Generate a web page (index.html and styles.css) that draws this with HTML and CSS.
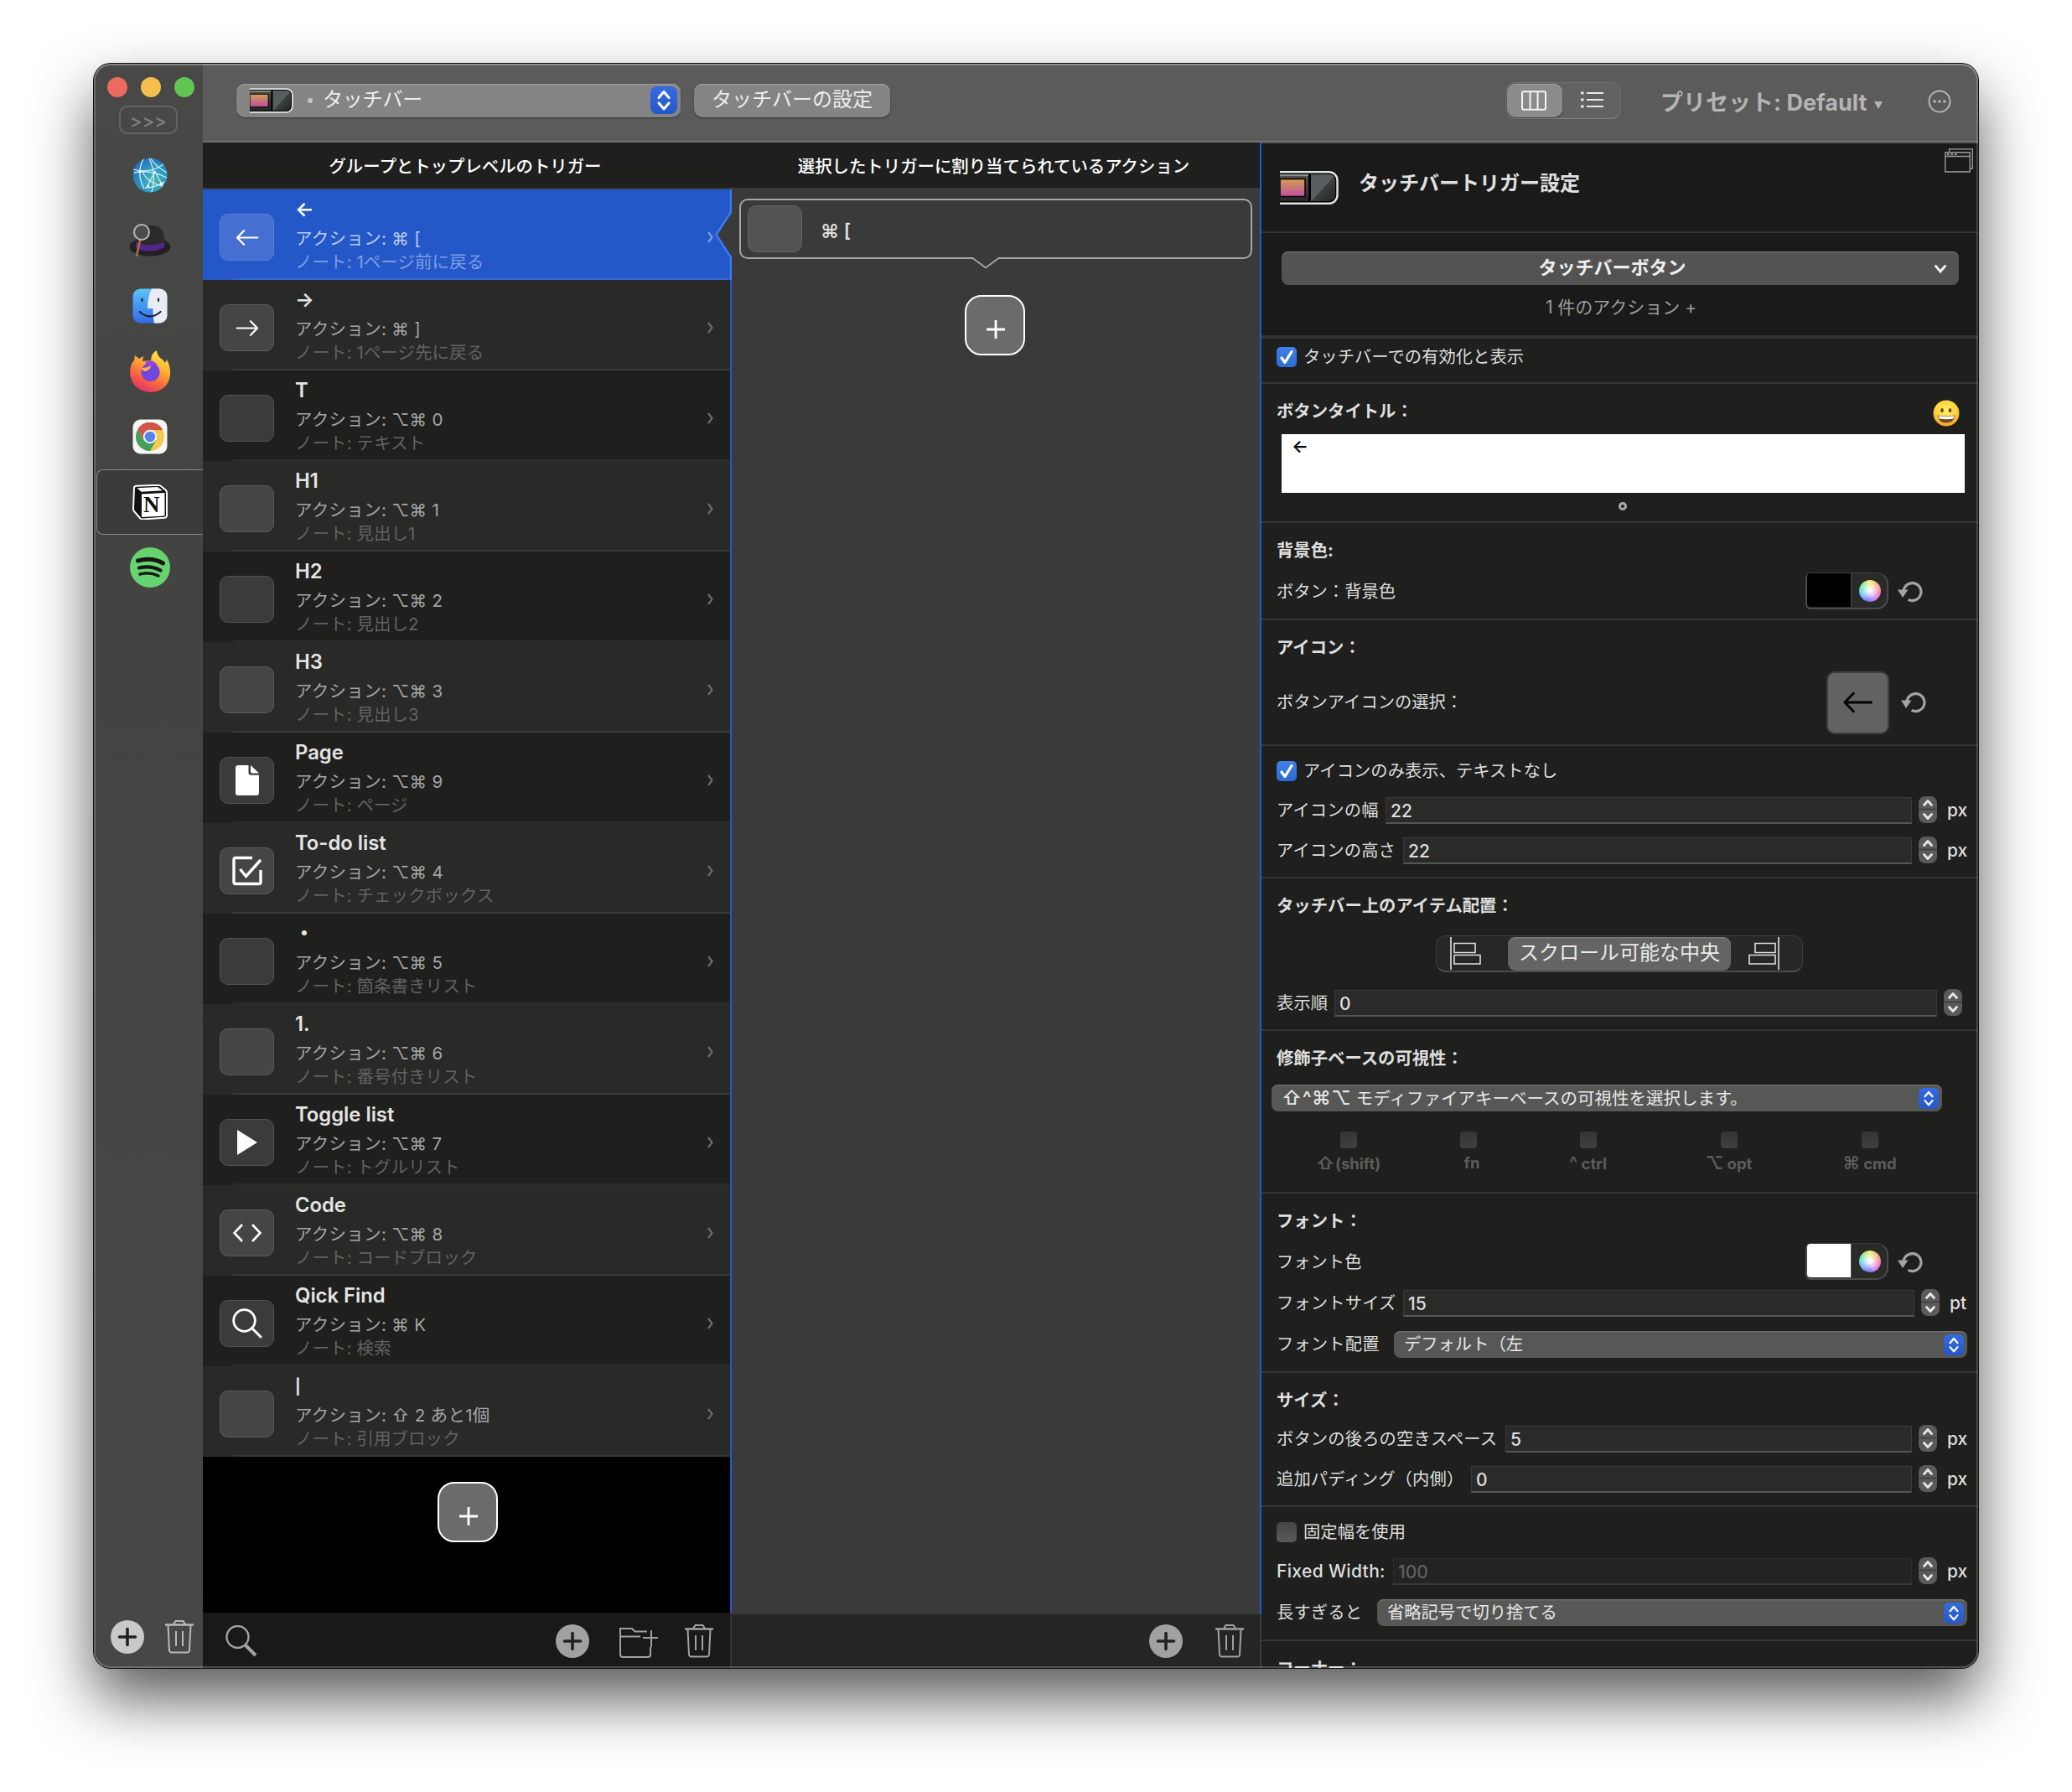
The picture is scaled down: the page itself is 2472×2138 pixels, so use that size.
FILE: index.html
```html
<!DOCTYPE html>
<html lang="ja">
<head>
<meta charset="utf-8">
<title>タッチバー</title>
<link rel="stylesheet" href="styles.css">
</head>
<body>
<svg class="defs" width="0" height="0">
  <defs>
    <linearGradient id="g-sunset" x1="0" y1="0" x2="0" y2="1"><stop offset="0" stop-color="#d49f50"/><stop offset="1" stop-color="#bf4da0"/></linearGradient>
    <linearGradient id="g-strip" x1="0" y1="0" x2="0" y2="1"><stop offset="0" stop-color="#555"/><stop offset="1" stop-color="#262626"/></linearGradient>
    <linearGradient id="g-glass" x1="0" y1="0" x2="1" y2="1"><stop offset="0" stop-color="#545c5c"/><stop offset=".5" stop-color="#56605f"/><stop offset=".52" stop-color="#3c4040"/><stop offset="1" stop-color="#222"/></linearGradient>
    <symbol id="touchbar" viewBox="0 0 70 40">
      <path d="M0 1.5h58a10 10 0 0 1 10 10v17a10 10 0 0 1-10 10H0z" fill="#000"/>
      <path d="M0 4h34v32H0z" fill="url(#g-strip)"/><path d="M0 4h34v2H0z" fill="#8c9391"/>
      <path d="M0 9.500h30v21H0z" fill="url(#g-sunset)" stroke="#000" stroke-width="1.500"/>
      <path d="M37 4h22a7 7 0 0 1 7 7v18a7 7 0 0 1-7 7H37z" fill="url(#g-glass)"/>
      <path d="M0 1.200h58.500a10 10 0 0 1 10 10v17.600a10 10 0 0 1-10 10H0" fill="none" stroke="#dfe6e4" stroke-width="2.400"/>
    </symbol>
    <symbol id="trash" viewBox="0 0 34 40">
      <g fill="none" stroke="currentColor" stroke-width="2"><path d="M0 5.500h34" stroke-width="2.600"/><path d="M10 5l2.500-4h9L24 5M3.500 6l1.500 30q.3 2.500 2.500 2.500h19q2.200 0 2.500-2.500L30.500 6M13 13v18M21 13v18"/></g>
    </symbol>
    <symbol id="add" viewBox="0 0 40 40"><circle cx="20" cy="20" r="20" fill="currentColor"/><path class="cross" d="M20 10.500v19M10.500 20h19" stroke-width="3.600" stroke-linecap="round"/></symbol>
    <symbol id="loupe" viewBox="0 0 38 38"><g fill="none" stroke="currentColor"><circle cx="14.500" cy="14" r="13" stroke-width="2.400"/><path d="M24 24l12 12" stroke-width="4"/></g></symbol>
    <symbol id="folder" viewBox="0 0 46 36"><path d="M37 23v9q0 3-3 3H4q-3 0-3-3V1h14l3.500 3.500H33M1 10.500h24M38 3v20M28 12h18" fill="none" stroke="currentColor" stroke-width="2"/></symbol>
    <symbol id="updown" viewBox="0 0 32 32"><path d="M10 13l6-7 6 7M10 19.500l6 7 6-7" fill="none" stroke="#fff" stroke-width="3" stroke-linecap="round" stroke-linejoin="round"/></symbol>
    <symbol id="step" viewBox="0 0 22 32"><path d="M0 15.500h22" stroke="#3c3c3a" stroke-width="1.500"/><path d="M6.500 10.500L11 5.500l4.500 5M6.500 21.500l4.500 5 4.500-5" fill="none" stroke="#e6e6e6" stroke-width="2.800" stroke-linecap="round" stroke-linejoin="round"/></symbol>
    <symbol id="chev" viewBox="0 0 10 14"><path d="M2 1l4.500 6L2 13" fill="none" stroke="currentColor" stroke-width="2.200"/></symbol>
    <symbol id="tick" viewBox="0 0 24 24"><path d="M6 13l4 5.500L18 5.500" fill="none" stroke="#fff" stroke-width="3.200" stroke-linecap="round" stroke-linejoin="round"/></symbol>
    <symbol id="reset" viewBox="0 0 30 26"><path d="M7 14A10.500 10.500 0 1 1 12.500 22.300" fill="none" stroke="#a3a3a1" stroke-width="3.200"/><path d="M0 10.500h12.500L6 20z" fill="#a3a3a1"/></symbol>
    <symbol id="arrow-l" viewBox="0 0 34 24"><path d="M32.500 12H2M12 1.500L1.800 12 12 22.500" fill="none" stroke="currentColor" stroke-width="2.800" stroke-linecap="round" stroke-linejoin="round"/></symbol>
    <symbol id="plus" viewBox="0 0 22 22"><path d="M11 0v22M0 11h22" stroke="#fff" stroke-width="2.800"/></symbol>
  </defs>
</svg>

<div class="window">
  <aside class="sidebar">
    <div class="lights"><i class="red"></i><i class="amber"></i><i class="green"></i></div>
    <div class="expand">&gt;&gt;&gt;</div>
    <div class="apps">
      <div class="app"><svg width="42" height="42" viewBox="0 0 42 42"><defs><radialGradient id="gl" cx=".6" cy=".65" r=".65"><stop offset="0" stop-color="#4fb3b0"/><stop offset=".55" stop-color="#3298c4"/><stop offset="1" stop-color="#2672bd"/></radialGradient></defs><circle cx="21" cy="21" r="20.500" fill="url(#gl)"/><g fill="none" stroke="#c8f2fa" stroke-width="1.300"><path d="M1 14Q20 20 37 8M13 2Q4 18 14 37M22 1Q27 10 41 18M20 1Q29 20 23 41M2 18Q22 14 41 24M27 16L18 34M27 17L35 32M15 36Q27 36 38 29M12 17Q18 30 36 34"/></g><g fill="#fff"><circle cx="9" cy="16.500" r="1.800"/><circle cx="26.500" cy="18" r="1.400"/><circle cx="34.500" cy="31.500" r="2"/><circle cx="18.500" cy="34" r="1.500"/></g></svg></div>
      <div class="app"><svg width="50" height="42" viewBox="0 0 50 42"><ellipse cx="25" cy="28.500" rx="24.500" ry="11" fill="#232023"/><path d="M9 29V16Q12 3 26 3q15 0 16 15v11Q26 38 9 29z" fill="#2a2a2b"/><path d="M8 23q17 7 34 0v6q-17 9-34 1z" fill="#552688"/><path d="M13 20L9 40" stroke="#a8703f" stroke-width="2.600"/><circle cx="15" cy="11" r="9" fill="#494b4c" stroke="#b9b9b9" stroke-width="2"/></svg></div>
      <div class="app"><svg width="42" height="42" viewBox="0 0 42 42"><defs><linearGradient id="fi" x1="0" y1="0" x2="0" y2="1"><stop offset="0" stop-color="#5cc2f7"/><stop offset="1" stop-color="#2f6cea"/></linearGradient></defs><rect x=".5" y=".5" width="41" height="41" rx="9" fill="url(#fi)"/><path d="M23 .5h9.500a9 9 0 0 1 9 9v23a9 9 0 0 1-9 9H26Q24 33 24.500 24H18Q18 10 23 .5z" fill="#e9edf3"/><path d="M11.500 12.500v2.500M31 12.500v2.500M8.500 28q12.500 11 25 0" fill="none" stroke="#1a2433" stroke-width="2.200" stroke-linecap="round"/></svg></div>
      <div class="app"><svg width="50" height="50" viewBox="0 0 50 50"><defs><linearGradient id="ff" x1=".8" y1="0" x2=".3" y2="1"><stop offset="0" stop-color="#fff04f"/><stop offset=".4" stop-color="#ffab33"/><stop offset=".72" stop-color="#f9603f"/><stop offset="1" stop-color="#dd3173"/></linearGradient></defs><path d="M1 27Q1 17 6 12l1-6 5 4 5-3-1 6 10-1Q26 4 33 0q0 7 7 11l3 4 2-4q5 9 4 19-3 19-24 20Q3 48 1 27z" fill="url(#ff)"/><circle cx="25.500" cy="26" r="11" fill="#7045e2"/><path d="M15 21q7 0 11-3 0 4-4 6-5 3-7-3z" fill="#ffb340"/><path d="M19 14q9-5 15 4-7-3-10 1z" fill="#9b3fe0"/></svg></div>
      <div class="app"><svg width="42" height="42" viewBox="0 0 42 42"><rect x=".5" y=".5" width="41" height="41" rx="9" fill="#f6f6f6"/><circle cx="21" cy="21" r="17" fill="#f6c84d"/><path d="M21 21L6.300 12.500A17 17 0 0 1 35.700 12.500H21z" fill="#cf5546"/><path d="M21 13H36A17 17 0 0 0 6.300 12.500L13.500 25z" fill="#cf5546"/><path d="M6.300 12.500A17 17 0 0 0 21 38L28.400 25.300 13.600 25.300z" fill="#459f5b"/><circle cx="21" cy="21" r="8.200" fill="#f6f6f6"/><circle cx="21" cy="21" r="6.300" fill="#5286ec"/></svg></div>
      <div class="app current"><svg width="42" height="42" viewBox="0 0 42 42"><path d="M2 4q0-2 3-2.300L30 .8q2 0 4 1.200l5.500 4.500Q41 8 41 10v27q0 2.500-3 2.800L12 41.500q-2 0-3.500-2L2 32q-1-1-1-3z" fill="#111" stroke="#fff" stroke-width="2"/><path d="M5.500 4.200L30 3l6 4.300-25.500 1.500z" fill="#fff"/><path d="M11 11.500L38.500 10v27.500L11 39z" fill="#fff"/></svg><b class="notion">N</b></div>
      <div class="app"><svg width="48" height="48" viewBox="0 0 48 48"><circle cx="24" cy="24" r="24" fill="#65d36e"/><g fill="none" stroke="#151515" stroke-linecap="round"><path d="M9.500 16Q26 11.500 39.500 19" stroke-width="5"/><path d="M11 24.500Q25 21 36.500 27.500" stroke-width="4.200"/><path d="M12 32Q24 29 34 34" stroke-width="3.400"/></g></svg></div>
    </div>
    <div class="side-foot"><svg class="light" width="40" height="40"><use href="#add"/></svg><svg width="34" height="40"><use href="#trash"/></svg></div>
  </aside>

  <div class="main">
    <header class="toolbar">
      <div class="popup big"><svg width="52" height="30" class="tb-small"><use href="#touchbar"/></svg><i class="dot"></i><span>タッチバー</span><svg class="knob"><use href="#updown"/></svg></div>
      <div class="button">タッチバーの設定</div>
      <div class="segments">
        <div class="on"><svg width="30" height="24" viewBox="0 0 30 24"><path d="M3 1.200h24q2 0 2 2v17.600q0 2-2 2H3q-2 0-2-2V3.200q0-2 2-2zM10.500 1v22M19.500 1v22" fill="none" stroke="#f4f4f4" stroke-width="2"/></svg></div>
        <div><svg width="27" height="20" viewBox="0 0 27 20"><path d="M7 2h20M7 10h20M7 18h20" stroke="#e8e8e8" stroke-width="2.200"/><path d="M0 2h3.500M0 10h3.500M0 18h3.500" stroke="#e8e8e8" stroke-width="3.200"/></svg></div>
      </div>
      <div class="preset"><span>プリセット: Default</span><svg width="10" height="9" viewBox="0 0 10 9"><path d="M0 0h10L5 9z" fill="#b4b4b4"/></svg></div>
      <svg class="more" width="28" height="28" viewBox="0 0 28 28"><circle cx="14" cy="14" r="12.500" fill="none" stroke="#b4b4b4" stroke-width="2"/><path d="M6.500 14h3.200M12.400 14h3.200M18.300 14h3.200" stroke="#b4b4b4" stroke-width="3"/></svg>
    </header>

    <div class="columns">
      <section class="triggers">
        <h2>グループとトップレベルのトリガー</h2>
        <ul>
          <li class="selected"><div class="tile"><svg width="28" height="19"><use href="#arrow-l"/></svg></div><div class="txt"><b>←</b><span>アクション: ⌘ [</span><small>ノート: 1ページ前に戻る</small></div><svg class="chev"><use href="#chev"/></svg><svg class="notch" width="20" height="108" viewBox="0 0 20 108"><path d="M20 26L2 54l18 28z" fill="#3a3a3a"/><path d="M19 0v27L1.500 54 19 81v27" fill="none" stroke="#3a7bf6" stroke-width="2.400"/></svg></li>
          <li><div class="tile"><svg class="flip" width="28" height="19"><use href="#arrow-l"/></svg></div><div class="txt"><b>→</b><span>アクション: ⌘ ]</span><small>ノート: 1ページ先に戻る</small></div><svg class="chev"><use href="#chev"/></svg></li>
          <li><div class="tile"></div><div class="txt"><b>T</b><span>アクション: ⌥⌘ 0</span><small>ノート: テキスト</small></div><svg class="chev"><use href="#chev"/></svg></li>
          <li><div class="tile"></div><div class="txt"><b>H1</b><span>アクション: ⌥⌘ 1</span><small>ノート: 見出し1</small></div><svg class="chev"><use href="#chev"/></svg></li>
          <li><div class="tile"></div><div class="txt"><b>H2</b><span>アクション: ⌥⌘ 2</span><small>ノート: 見出し2</small></div><svg class="chev"><use href="#chev"/></svg></li>
          <li><div class="tile"></div><div class="txt"><b>H3</b><span>アクション: ⌥⌘ 3</span><small>ノート: 見出し3</small></div><svg class="chev"><use href="#chev"/></svg></li>
          <li><div class="tile"><svg width="28" height="36" viewBox="0 0 28 36"><path d="M3 0h12.500v8.500q0 3.200 3.200 3.200H28V33q0 3-3 3H3q-3 0-3-3V3q0-3 3-3z" fill="#fff"/><path d="M18 0l10 9.500h-8.500q-1.500 0-1.500-1.500z" fill="#fff"/></svg></div><div class="txt"><b>Page</b><span>アクション: ⌥⌘ 9</span><small>ノート: ページ</small></div><svg class="chev"><use href="#chev"/></svg></li>
          <li><div class="tile"><svg width="36" height="36" viewBox="0 0 36 36"><path d="M24 2.500H4q-2 0-2 2v27q0 2 2 2h28q2 0 2-2V17M9.500 16l7 8.500L34 5" fill="none" stroke="#fff" stroke-width="3.400"/></svg></div><div class="txt"><b>To-do list</b><span>アクション: ⌥⌘ 4</span><small>ノート: チェックボックス</small></div><svg class="chev"><use href="#chev"/></svg></li>
          <li><div class="tile"></div><div class="txt"><b class="mid">・</b><span>アクション: ⌥⌘ 5</span><small>ノート: 箇条書きリスト</small></div><svg class="chev"><use href="#chev"/></svg></li>
          <li><div class="tile"></div><div class="txt"><b>1.</b><span>アクション: ⌥⌘ 6</span><small>ノート: 番号付きリスト</small></div><svg class="chev"><use href="#chev"/></svg></li>
          <li><div class="tile"><svg width="24" height="30" viewBox="0 0 24 30"><path d="M0 0l24 15L0 30z" fill="#fff"/></svg></div><div class="txt"><b>Toggle list</b><span>アクション: ⌥⌘ 7</span><small>ノート: トグルリスト</small></div><svg class="chev"><use href="#chev"/></svg></li>
          <li><div class="tile"><svg width="34" height="22" viewBox="0 0 34 22"><path d="M11 1L1.500 11 11 21M23 1l9.500 10L23 21" fill="none" stroke="#fff" stroke-width="2.600"/></svg></div><div class="txt"><b>Code</b><span>アクション: ⌥⌘ 8</span><small>ノート: コードブロック</small></div><svg class="chev"><use href="#chev"/></svg></li>
          <li><div class="tile"><svg width="36" height="36" viewBox="0 0 36 36"><circle cx="14.500" cy="14.500" r="12.800" fill="none" stroke="#fff" stroke-width="2.800"/><path d="M23.500 23.500L34 34" stroke="#fff" stroke-width="3" stroke-linecap="round"/></svg></div><div class="txt"><b>Qick Find</b><span>アクション: ⌘ K</span><small>ノート: 検索</small></div><svg class="chev"><use href="#chev"/></svg></li>
          <li><div class="tile"></div><div class="txt"><b class="bar">|</b><span>アクション: ⇧ 2 あと1個</span><small>ノート: 引用ブロック</small></div><svg class="chev"><use href="#chev"/></svg></li>
        </ul>
        <div class="void"><div class="add-tile"><svg width="22" height="22"><use href="#plus"/></svg></div></div>
        <footer><svg class="find" width="38" height="38"><use href="#loupe"/></svg><svg width="40" height="40"><use href="#add"/></svg><svg class="fold" width="46" height="36"><use href="#folder"/></svg><svg width="34" height="40"><use href="#trash"/></svg></footer>
      </section>

      <section class="actions">
        <h2>選択したトリガーに割り当てられているアクション</h2>
        <div class="stage">
          <div class="action"><div class="tile"></div><span>⌘ [</span><svg class="tail" width="34" height="14" viewBox="0 0 34 14"><path d="M1 0l16 12.500L33 0z" fill="#3a3a3a"/><path d="M0 1h1.500L17 12.500 32.500 1H34" fill="none" stroke="#a6a6a6" stroke-width="1.800"/></svg></div>
          <div class="add-tile"><svg width="22" height="22"><use href="#plus"/></svg></div>
        </div>
        <footer><svg width="40" height="40"><use href="#add"/></svg><svg width="34" height="40"><use href="#trash"/></svg></footer>
      </section>

      <section class="config">
        <div class="cfg-head"><svg width="70" height="40"><use href="#touchbar"/></svg><h1>タッチバートリガー設定</h1><svg class="win" width="34" height="29" viewBox="0 0 34 29"><g fill="none" stroke="#a0a09e" stroke-width="1.300"><path d="M5.500 4V.8h27.800V24H31"/><path d="M.7 5h29.500v23H.7zM.7 9.500h29.500"/><path d="M3 7.200h2.500M7.500 7.200H10M12 7.200h2.500" stroke-width="2"/></g></svg></div>
        <div class="cfg-type"><div class="drop">タッチバーボタン<svg width="16" height="12" viewBox="0 0 16 12"><path d="M2.500 2.500L8 9l5.500-6.500" fill="none" stroke="#eee" stroke-width="3" stroke-linecap="round"/></svg></div><p>1 件のアクション +</p></div>

        <div class="group g-enable"><div class="row tall"><i class="check"><svg><use href="#tick"/></svg></i>タッチバーでの有効化と表示</div></div>

        <div class="group g-title"><h3>ボタンタイトル：<svg class="emoji" width="32" height="32" viewBox="0 0 32 32"><defs><radialGradient id="em" cx=".5" cy=".4" r=".6"><stop offset="0" stop-color="#fff06a"/><stop offset=".7" stop-color="#fcd03c"/><stop offset="1" stop-color="#ef9a2c"/></radialGradient></defs><circle cx="16" cy="16" r="15.500" fill="url(#em)"/><ellipse cx="11" cy="12.500" rx="1.800" ry="2.600" fill="#6b4413"/><ellipse cx="20.500" cy="12.500" rx="1.800" ry="2.600" fill="#6b4413"/><path d="M5.500 18.500q10.500 2 21 0-1 9-10.500 9t-10.500-9z" fill="#75491c"/><path d="M6.500 19.300q9.500 1.500 19 0l-1 3.200q-8 1.500-17 0z" fill="#fff"/></svg></h3><div class="paper">←</div><i class="ring"></i></div>

        <div class="group g-bg"><h3>背景色:</h3><div class="row color">ボタン：背景色<div class="well black"><b></b><i></i></div><svg class="reset"><use href="#reset"/></svg></div></div>

        <div class="group g-icon"><h3>アイコン：</h3><div class="row icon">ボタンアイコンの選択：<div class="pick"><svg width="35" height="26"><use href="#arrow-l"/></svg></div><svg class="reset"><use href="#reset"/></svg></div></div>

        <div class="group g-size"><div class="row tall"><i class="check"><svg><use href="#tick"/></svg></i>アイコンのみ表示、テキストなし</div>
          <div class="row"><label style="width:130px">アイコンの幅</label><div class="field">22</div><svg class="stepper"><use href="#step"/></svg><em>px</em></div>
          <div class="row"><label style="width:151px">アイコンの高さ</label><div class="field">22</div><svg class="stepper"><use href="#step"/></svg><em>px</em></div></div>

        <div class="group g-place"><h3>タッチバー上のアイテム配置：</h3>
          <div class="place"><svg width="37" height="40" viewBox="0 0 37 40"><path d="M1 0v39M5 7.500h25v11H5zM5 21.500h31v10.500H5z" fill="none" stroke="#e0e0e0" stroke-width="1.600"/></svg><span>スクロール可能な中央</span><svg width="37" height="40" viewBox="0 0 37 40"><path d="M36 0v39M32 7.500H8v11h24zM32 21.500H1v10.500h31z" fill="none" stroke="#e0e0e0" stroke-width="1.600"/></svg></div>
          <div class="row order"><label style="width:69px">表示順</label><div class="field">0</div><svg class="stepper"><use href="#step"/></svg></div></div>

        <div class="group g-mod"><h3>修飾子ベースの可視性：</h3>
          <div class="select mods"><span><kbd>⇧^⌘⌥</kbd> モディファイアキーベースの可視性を選択します。</span><svg class="knob"><use href="#updown"/></svg></div>
          <div class="keys"><div><i></i><kbd>⇧</kbd>(shift)</div><div class="fn"><i></i>fn</div><div><i></i><kbd>^</kbd> ctrl</div><div><i></i><kbd>⌥</kbd> opt</div><div><i></i><kbd>⌘</kbd> cmd</div></div></div>

        <div class="group g-font"><h3>フォント：</h3><div class="row color">フォント色<div class="well white"><b></b><i></i></div><svg class="reset"><use href="#reset"/></svg></div>
          <div class="row"><label style="width:151px">フォントサイズ</label><div class="field">15</div><svg class="stepper"><use href="#step"/></svg><em class="pt">pt</em></div>
          <div class="row"><label style="width:140px">フォント配置</label><div class="select"><span>デフォルト（左</span><svg class="knob"><use href="#updown"/></svg></div></div></div>

        <div class="group g-dim"><h3>サイズ：</h3>
          <div class="row"><label style="width:273px">ボタンの後ろの空きスペース</label><div class="field">5</div><svg class="stepper"><use href="#step"/></svg><em>px</em></div>
          <div class="row"><label style="width:232px">追加パディング（内側）</label><div class="field">0</div><svg class="stepper"><use href="#step"/></svg><em>px</em></div></div>

        <div class="group g-fixed"><div class="row tall"><i class="check off"></i>固定幅を使用</div>
          <div class="row"><label class="latin" style="width:139px">Fixed Width:</label><div class="field dim">100</div><svg class="stepper"><use href="#step"/></svg><em>px</em></div>
          <div class="row"><label style="width:120px">長すぎると</label><div class="select"><span>省略記号で切り捨てる</span><svg class="knob"><use href="#updown"/></svg></div></div></div>

        <div class="group g-corner"><h3>コーナー：</h3></div>
      </section>
    </div>
  </div>
</div>
</body>
</html>
```

FILE: styles.css
```css
* { box-sizing: border-box; }
body {
  margin: 0;
  width: 2472px;
  height: 2138px;
  padding: 76px 112px;
  overflow: hidden;
  background: #fff;
  color: #dededd;
  font: 400 20.3px/30px Inter, "Noto Sans CJK JP", sans-serif;
}
.defs { position: absolute; }
svg { display: block; flex: none; }
h1, h2, h3, p, ul { margin: 0; padding: 0; }
i, em { font-style: normal; }
kbd { font-family: inherit; }
.cross { stroke: #222221; }

.window {
  position: relative;
  display: flex;
  width: 2248px;
  height: 1914px;
  border-radius: 20px;
  overflow: hidden;
  background: #1f1f1d;
}
body::before {
  content: "";
  position: absolute;
  left: 112px;
  top: 76px;
  width: 2248px;
  height: 1914px;
  border-radius: 20px;
  box-shadow: 0 0 0 1px #0c0c0c, 0 36px 72px rgba(0, 0, 0, .66);
}
.window::after {
  content: "";
  position: absolute;
  inset: 0;
  border-radius: 20px;
  box-shadow: inset 0 0 0 2px rgba(255, 255, 255, .2), inset 0 2px 0 rgba(255, 255, 255, .16);
}

/* sidebar */
.sidebar {
  display: flex;
  flex-direction: column;
  width: 130px;
  background: linear-gradient(#484846, #434341 30%, #474745);
}
.lights { display: flex; gap: 16px; padding: 16px 0 0 16px; }
.lights i { width: 24px; height: 24px; border-radius: 50%; }
.red { background: #ed6a5e; }
.amber { background: #f4bf4f; }
.green { background: #61c554; }
.expand {
  width: 70px;
  height: 34px;
  margin: 10px 0 0 30px;
  border: 2px solid #646462;
  border-radius: 10px;
  color: #80807e;
  font-size: 22px;
  font-weight: 500;
  line-height: 33px;
  text-align: center;
}
.apps { display: flex; flex-direction: column; margin-top: 10px; }
.app { position: relative; display: flex; align-items: center; justify-content: center; height: 78px; padding-left: 4px; }
.app.current {
  margin-left: 3px;
  padding-left: 0;
  background: #3a3a3a;
  border: 1.500px solid #858583;
  border-right: 0;
  border-radius: 8px 0 0 8px;
}
.notion {
  position: absolute;
  left: 55px;
  top: 23px;
  color: #111;
  font: 700 27px/36px "Liberation Serif", serif;
}
.side-foot { display: flex; gap: 25px; margin-top: auto; padding: 0 0 17px 20px; color: #b9b9b7; }
.side-foot .light { color: #c9c9c7; }

/* toolbar */
.main { display: flex; flex-direction: column; flex: 1; }
.toolbar {
  display: flex;
  height: 94px;
  padding-top: 24px;
  padding-left: 40px;
  background: #5b5b5b;
  border-bottom: 2px solid #757575;
  font-size: 24px;
}
.popup, .button {
  height: 40px;
  border-radius: 10px;
  background: #848484;
  box-shadow: inset 0 1.500px 0 #9c9c9c, 0 1px 2px rgba(0, 0, 0, .4);
  color: #ededed;
  line-height: 37px;
}
.popup { display: flex; width: 530px; padding: 3px 4px 0 16px; }
.popup span { flex: 1; line-height: 31px; letter-spacing: -.2px; }
.tb-small { margin-top: 2px; }
.dot { width: 6px; height: 6px; margin: 14px 12px 0 17px; border-radius: 50%; background: #c5c5c5; }
.knob { width: 24px; height: 25px; border-radius: 6px; background: linear-gradient(#356ce0, #2557c8); }
.popup .knob { width: 32px; height: 33px; border-radius: 8px; }
.button { width: 234px; margin-left: 16px; text-align: center; }
.segments {
  display: flex;
  width: 138px;
  height: 44px;
  margin: -2px 0 0 734px;
  padding: 2px;
  border: 1px solid #707070;
  border-bottom-color: #848484;
  border-radius: 12px;
  background: #626262;
}
.segments div { display: flex; flex: 1; align-items: center; justify-content: center; padding: 0 0 2px 3px; }
.segments .on { margin: -1px 0 -1px -1px; padding: 0 2px 0 0; border-radius: 10px; background: #8b8b8b; box-shadow: 0 1px 2px rgba(0, 0, 0, .4), inset 0 1px 0 #9e9e9e; }
.preset { display: flex; width: 265px; margin-left: 47px; color: #b4b4b4; font-weight: 700; font-size: 27px; line-height: 46px; white-space: nowrap; }
.preset svg { margin: 21px 0 0 9px; }
.more { margin: 7px 0 0 54px; }

/* columns */
.columns { display: flex; flex: 1; min-height: 0; }
.columns section { display: flex; flex-direction: column; }
h2 {
  height: 54px;
  padding-right: 5px;
  background: #1f1f1e;
  color: #fff;
  font-weight: 500;
  font-size: 20.400px;
  line-height: 57px;
  text-align: center;
}
.triggers { width: 631px; background: #191918; }
.triggers ul { list-style: none; border-top: 2px solid #373736; border-right: 2px solid #2559c9; }
li {
  position: relative;
  display: flex;
  height: 108px;
  padding: 9px 18px 0 20px;
  background: #1f1f1e;
}
li:nth-child(even) { background: #292928; }
li::before { content: ""; position: absolute; left: 36px; right: 0; bottom: 0; height: 2px; background: #2d2d2c; }
li:nth-child(even)::before { background: #3a3a39; }
li.selected { margin-right: -2px; padding-right: 20px; background: #2458c9; }
li.selected::before { background: #3565cf; }
.notch { position: absolute; right: 0; top: 0; }
.tile {
  display: flex;
  align-items: center;
  justify-content: center;
  width: 65px;
  height: 56px;
  margin-top: 20px;
  border: 1.500px solid #525251;
  border-radius: 10px;
  background: #3b3b3a;
  color: #fff;
}
li:nth-child(even) .tile { background: #454545; border-color: #5b5b5a; }
li.selected .tile { background: #456fd0; border-color: #5b80d6; }
.flip { transform: scaleX(-1); }
.txt { display: flex; flex-direction: column; flex: 1; margin-left: 25px; }
.txt b { height: 29px; color: #e4e4e3; font-weight: 600; font-size: 23.800px; line-height: 29px; }
.txt .bar { font-size: 18px; font-weight: 700; line-height: 31px; }
.txt .mid { margin-left: -1px; }
.txt span { margin-top: 6px; color: #a5a5a4; font-size: 20.500px; line-height: 29px; height: 30px; letter-spacing: .3px; white-space: pre; }
.txt small { color: #626261; font-size: 20.500px; line-height: 26px; letter-spacing: .05px; }
.selected .txt b { color: #fff; }
.selected .txt span { color: #bdcdf0; }
.selected .txt small { color: #7f9ee2; }
.chev { width: 10px; height: 14px; margin-top: 41px; color: #6c6c6b; }
.selected .chev { color: #7f9ee2; }
.void { flex: 1; padding: 30px 0 0 280px; background: #000; border-right: 2px solid #2559c9; }
.add-tile {
  display: flex;
  align-items: center;
  justify-content: center;
  width: 72px;
  height: 72px;
  padding: 9px 0 0 2px;
  border: 2px solid #fff;
  border-radius: 20px;
  background: #6b6b69;
}
footer { display: flex; align-items: center; justify-content: flex-end; color: #a1a19f; }
.triggers footer { height: 66px; padding: 2px 20px 0 27px; border-right: 2px solid #333; }
.find { margin-right: auto; }
.fold { margin: 4px 32px 0 36px; }

.actions { width: 632px; background: #252524; }
.actions h2, .stage { border-right: 2px solid #2559c9; }
.stage { flex: 1; padding: 13px 9px 0; background: #3a3a3a; }
.action {
  position: relative;
  display: flex;
  height: 72px;
  padding: 6px 8px;
  border: 2px solid #a6a6a6;
  border-radius: 10px;
  font-weight: 600;
}
.action .tile { height: 56px; margin: 0; background: #535353; border-color: #626262; }
.action span { margin-left: 22px; font-size: 22.500px; line-height: 61px; }
.tail { position: absolute; left: 275px; top: 68px; }
.stage .add-tile { margin: 43px 0 0 269px; }
.actions footer { height: 64px; padding-right: 19px; gap: 39px; border-right: 2px solid #3a3a3a; }

/* settings */
.columns .config { flex: 1; min-width: 0; overflow: hidden; }
.config > div { flex: none; }
.cfg-head { display: flex; height: 108px; padding: 32px 6px 0 22px; background: #1a1a1a; border: solid #333; border-width: 2px 0; }
h1 { flex: 1; margin-left: 24px; color: #e0e0e0; font-weight: 700; font-size: 24px; line-height: 30px; }
.win { margin-top: -27px; }
.cfg-type { height: 126px; padding: 22px 23px 0 24px; background: #1a1a1a; border-bottom: 4px solid #333; }
.drop {
  position: relative;
  height: 40px;
  border-radius: 8px;
  background: #535353;
  box-shadow: inset 0 1.500px 0 #6b6b6b;
  color: #eee;
  font-weight: 700;
  font-size: 22px;
  line-height: 39px;
  text-align: center;
  padding-right: 19px;
}
.drop svg { position: absolute; right: 14px; top: 15px; }
.cfg-type p { margin-top: 11px; padding-left: 2px; color: #9d9d9b; font-size: 21px; line-height: 32px; text-align: center; }
.group { border-bottom: 2px solid #353534; padding-left: 18px; }
.g-enable { height: 54px; }
.g-title { height: 166px; }
.g-bg { height: 116px; }
.g-icon { height: 150px; }
.g-size { height: 158px; }
.g-place { height: 182px; }
.g-mod { height: 194px; }
.g-font { height: 214px; }
.g-dim { height: 160px; }
.g-fixed { height: 160px; }
.g-corner { height: 70px; }
h3 { display: flex; height: 64px; font-weight: 700; font-size: 20.350px; line-height: 65px; }
.emoji { margin: 19px 22px 0 auto; }
.paper { height: 70px; margin: -4px 16px 0 6px; padding-left: 12px; background: #fff; color: #000; font-size: 21px; font-weight: 600; line-height: 30px; }
.ring { display: block; width: 10px; height: 10px; margin: 11px auto 0; border: 3px solid #aaa; border-radius: 50%; position: relative; left: -6px; }

.row { display: flex; align-items: center; height: 34px; margin-bottom: 14px; white-space: nowrap; }
.row.tall { height: 60px; margin: 0; letter-spacing: .05px; }
.g-enable .tall { height: 44px; }
.check { width: 24px; height: 24px; margin-right: 8px; border-radius: 5px; background: linear-gradient(#4080e6, #2d6bd2); }
.check svg { width: 24px; height: 24px; }
.check.off { background: linear-gradient(#464645, #5a5a59); }
.row label { flex: none; letter-spacing: .15px; }
.row .latin { font-size: 21px; font-weight: 500; letter-spacing: .35px; }
.field {
  flex: 1;
  height: 32px;
  padding-left: 5px;
  border: 1px solid #3a3a39;
  border-bottom: 2px solid #555554;
  background: #2a2a29;
  font-size: 21px;
  font-weight: 500;
  line-height: 31px;
}
.field.dim { color: #60605f; background: #232322; border-color: #2c2c2b #2c2c2b #3a3a39; }
.stepper { width: 22px; height: 32px; margin: 0 12px 2px 8px; border-radius: 8px; background: #5a5a59; }
.row em { width: 37px; font-size: 21px; font-weight: 500; }
.row em.pt { width: 34px; }
.order .stepper { margin-right: 19px; }
.row.color { height: 36px; }
.well { display: flex; width: 99px; height: 44px; margin-left: auto; margin-top: -2px; border: 2px solid #4b4b4a; border-top: 1px solid #3c3c3b; border-radius: 6px 14px 14px 6px; background: #2a2a29; }
.well b { width: 53px; border-radius: 4px 0 0 4px; border-right: 1px solid #4b4b4a; margin-bottom: 1px; }
.black b { background: #000; }
.white b { background: #fff; }
.well i {
  width: 26px;
  height: 26px;
  margin: 8px 0 0 9px;
  border-radius: 50%;
  background: radial-gradient(#fff 5%, transparent 75%), conic-gradient(#f3e66a, #f39a6b 60deg, #f06ab0 100deg, #c667f0 150deg, #5c62ee 190deg, #58b8f0 250deg, #63e6b0 300deg, #a8ec6c 330deg, #f3e66a);
}
.reset { width: 30px; height: 26px; margin: 0 66px 0 11px; }
.row.icon { height: 68px; }
.pick { display: flex; align-items: center; justify-content: center; width: 75px; height: 75px; margin-left: auto; border: 2px solid #3e3e3d; border-radius: 10px; background: #626260; color: #000; }
.icon .reset { margin: 0 62px 0 14px; }

.place {
  display: flex;
  align-items: center;
  width: 438px;
  height: 44px;
  margin: 4px 0 20px 190px;
  padding: 0 27px 0 16px;
  border: 1px solid #3d3d3c;
  border-bottom: 2px solid #4b4b4a;
  border-radius: 12px;
  background: #272726;
}
.place span { width: 266px; height: 40px; margin: 0 21px 0 32px; border-radius: 9px; background: #646463; box-shadow: inset 0 1.500px 0 #7b7b7a; color: #eaeaea; font-size: 24px; line-height: 38px; text-align: center; white-space: nowrap; }
.select {
  display: flex;
  flex: 1;
  height: 32px;
  margin-right: 13px;
  padding: 4px 4px 0 12px;
  border-radius: 8px;
  background: #575756;
  box-shadow: inset 0 1.500px 0 #6d6d6c;
  color: #e8e8e7;
}
.select span { flex: 1; line-height: 24px; white-space: nowrap; }
.mods { width: 800px; margin-left: -6px; }
.mods span { font-size: 20.500px; }
.mods kbd { font-size: 23px; font-weight: 500; letter-spacing: .4px; }
.keys { display: flex; margin: 24px 0 0 -18px; padding-left: 32px; color: #5c5c5b; font-weight: 700; font-size: 18.500px; line-height: 35px; }
.keys kbd { font-size: 21px; }
.keys div { width: 143px; height: 56px; text-align: center; white-space: nowrap; }
.keys i { display: block; width: 20px; height: 20px; margin: 0 auto; border-radius: 4px; background: linear-gradient(#343433, #414140); }
.keys .fn { padding-left: 9px; }
.keys .fn i { margin-left: 53px; }
.keys div:nth-child(4) { width: 193px; }
.g-font .row:last-child { margin-top: 15px; }
.g-dim h3 { height: 62px; }
.g-fixed .row:last-child { margin-top: 15px; }
```
